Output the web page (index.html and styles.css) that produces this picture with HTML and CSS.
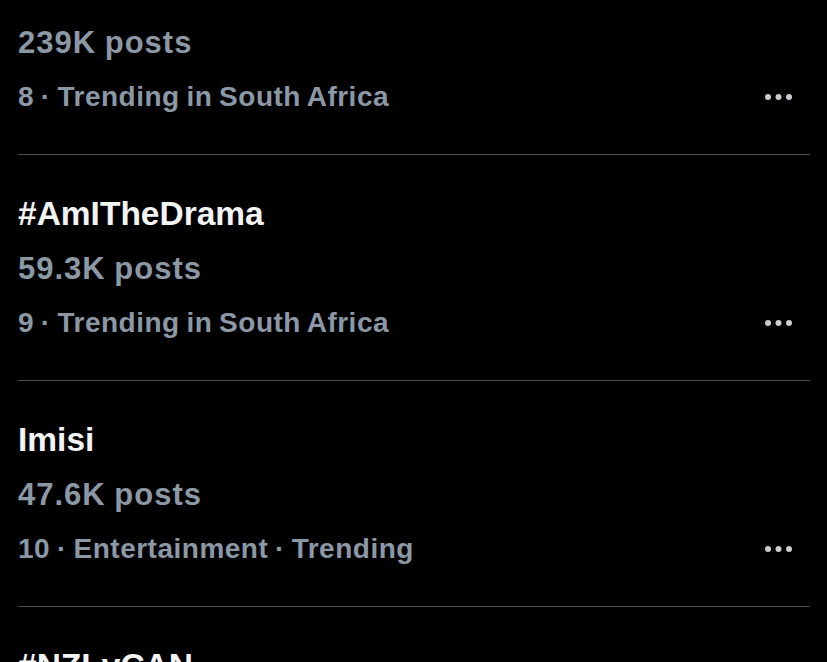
FILE: index.html
```html
<!DOCTYPE html>
<html lang="en">
<head>
  <meta charset="UTF-8" />
  <title>Trending</title>
  <meta name="viewport" content="width=device-width, initial-scale=1.0" />
  <link rel="stylesheet" href="styles.css">
</head>
<body>
  <div class="trends">
    <div class="trend">
      <div class="trend-posts">239K posts</div>
      <div class="trend-meta">
        <span>8 · Trending in South Africa</span>
        <button class="more" aria-label="More">
          <svg width="29" height="8" viewBox="0 0 29 8"><circle cx="4" cy="4" r="3"/><circle cx="14.5" cy="4" r="3"/><circle cx="25" cy="4" r="3"/></svg>
        </button>
      </div>
    </div>

    <div class="trend">
      <div class="trend-name">#AmITheDrama</div>
      <div class="trend-posts">59.3K posts</div>
      <div class="trend-meta">
        <span>9 · Trending in South Africa</span>
        <button class="more" aria-label="More">
          <svg width="29" height="8" viewBox="0 0 29 8"><circle cx="4" cy="4" r="3"/><circle cx="14.5" cy="4" r="3"/><circle cx="25" cy="4" r="3"/></svg>
        </button>
      </div>
    </div>

    <div class="trend">
      <div class="trend-name">Imisi</div>
      <div class="trend-posts">47.6K posts</div>
      <div class="trend-meta">
        <span>10 · Entertainment · Trending</span>
        <button class="more" aria-label="More">
          <svg width="29" height="8" viewBox="0 0 29 8"><circle cx="4" cy="4" r="3"/><circle cx="14.5" cy="4" r="3"/><circle cx="25" cy="4" r="3"/></svg>
        </button>
      </div>
    </div>

    <div class="trend">
      <div class="trend-name">#NZLvCAN</div>
    </div>
  </div>
</body>
</html>
```

FILE: styles.css
```css
html {
  background: #000;
}

body {
  margin: 0;
  height: 662px;
  overflow: hidden;
  background: #000;
  font-family: 'Liberation Sans', Arial, sans-serif;
  font-weight: bold;
}

.trends {
  padding: 16px 17px 0 18px;
}

.trend {
  padding-bottom: 30px;
  border-bottom: 1px solid #4d5053;
}

.trend + .trend {
  padding-top: 30px;
}

.trend:last-child {
  border-bottom: none;
}

.trend-name {
  color: #f2f3f4;
  font-size: 33.5px;
  line-height: 57px;
}

.trend-posts {
  color: #8b98a5;
  font-size: 31px;
  letter-spacing: 1px;
  word-spacing: -1px;
  line-height: 54px;
}

.trend-meta {
  display: flex;
  align-items: center;
  justify-content: space-between;
  height: 54px;
  color: #8b98a5;
  font-size: 28px;
  letter-spacing: 0.5px;
  word-spacing: -1.5px;
}

button.more {
  background: none;
  border: none;
  padding: 0;
  margin-right: 17px;
  display: flex;
  cursor: pointer;
}

button.more svg {
  fill: #c9cdd1;
}
```
